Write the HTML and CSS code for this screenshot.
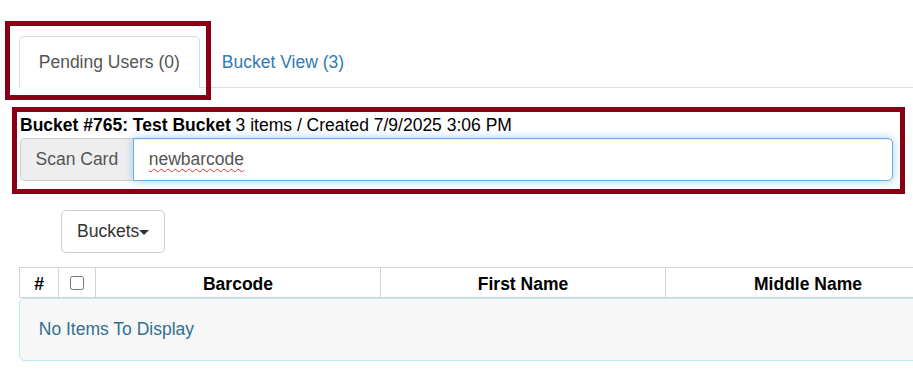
FILE: index.html
```html
<!DOCTYPE html>
<html lang="en">
<head>
    <meta charset="UTF-8">
    <meta name="viewport" content="width=device-width, initial-scale=1.0">
    <title>Patron Buckets</title>
    <link rel="stylesheet" href="styles.css">
</head>
<body>
    <div class="page">
        <div class="tabs-wrap">
            <ul class="nav-tabs">
                <li class="active"><a href="#">Pending Users (0)</a></li>
                <li><a href="#">Bucket View (3)</a></li>
            </ul>
            <!-- annotation box around the active tab -->
            <div class="mark mark-tab"></div>
        </div>

        <div class="bucket-box">
            <div class="bucket-title"><strong>Bucket #765: Test Bucket</strong> 3 items / Created 7/9/2025 3:06 PM</div>
            <div class="input-group">
                <span class="addon">Scan Card</span>
                <div class="scan-input"><span class="misspelled">newbarcode</span></div>
            </div>
        </div>

        <div class="toolbar">
            <button class="btn">Buckets<span class="caret"></span></button>
        </div>

        <table class="grid">
            <colgroup>
                <col class="col-num">
                <col class="col-check">
                <col class="col-field">
                <col class="col-field">
                <col class="col-field">
            </colgroup>
            <thead>
                <tr>
                    <th>#</th>
                    <th><input type="checkbox"></th>
                    <th>Barcode</th>
                    <th>First Name</th>
                    <th>Middle Name</th>
                </tr>
            </thead>
        </table>
        <div class="empty">No Items To Display</div>
    </div>
</body>
</html>
```

FILE: styles.css
```css
:root {
    --mark-color: #880015;
    --border-color: #d3d3d3;
    --link-color: #337ab7;
    --muted-text: #555;
}

* {
    margin: 0;
    padding: 0;
    box-sizing: border-box;
}

html, body {
    overflow: hidden;
}

body {
    font-family: "Liberation Sans", Arial, sans-serif;
    font-size: 17.5px;
    line-height: 25px;
    color: #333;
    background-color: white;
}

.page {
    padding: 36px 0 0 19px;
}

.tabs-wrap {
    position: relative;
}

.nav-tabs {
    display: flex;
    list-style: none;
    border-bottom: 1px solid #ddd;
}

.nav-tabs li {
    margin-bottom: -1px;
    margin-right: 2.5px;
}

.nav-tabs a {
    display: block;
    padding: 12.5px 18.75px;
    border: 1px solid transparent;
    border-radius: 5px 5px 0 0;
    color: var(--link-color);
    text-decoration: none;
}

.nav-tabs .active a {
    color: var(--muted-text);
    background-color: white;
    border-color: #ddd;
    border-bottom-color: transparent;
}

.mark {
    border: 5px solid var(--mark-color);
}

.mark-tab {
    position: absolute;
    top: -15px;
    left: -14px;
    width: 206px;
    height: 79px;
}

.bucket-box {
    width: 893px;
    margin: 19px 0 0 -7px;
    padding: 1px 7px 8.5px 3px;
    border: 5px solid var(--mark-color);
}

.bucket-title {
    color: #000;
}

.input-group {
    display: flex;
    height: 42.5px;
}

.addon {
    display: flex;
    align-items: center;
    padding: 0 14.5px;
    color: var(--muted-text);
    background-color: #eee;
    border: 1px solid #ccc;
    border-right: none;
    border-radius: 5px 0 0 5px;
}

.scan-input {
    flex: 1;
    display: flex;
    align-items: center;
    padding: 0 15px;
    color: var(--muted-text);
    background-color: white;
    border: 1px solid #66afe9;
    border-radius: 0 5px 5px 0;
    box-shadow: inset 0 1px 1px rgba(0, 0, 0, 0.075), 0 0 10px rgba(102, 175, 233, 0.6);
}

.misspelled {
    text-decoration: underline wavy #e0302c;
    text-decoration-thickness: 1px;
    text-underline-offset: 3px;
}

.toolbar {
    margin: 16px 0 0 42px;
}

.btn {
    font-family: inherit;
    font-size: 17.5px;
    line-height: 25px;
    padding: 7.75px 15px;
    color: #333;
    background-color: white;
    border: 1px solid #ccc;
    border-radius: 5px;
    cursor: pointer;
}

.caret {
    display: inline-block;
    width: 0;
    height: 0;
    vertical-align: middle;
    border-top: 5px solid;
    border-left: 5px solid transparent;
    border-right: 5px solid transparent;
}

.grid {
    margin-top: 14.5px;
    width: 931px;
    table-layout: fixed;
    border-collapse: collapse;
}

.col-num {
    width: 39px;
}

.col-check {
    width: 37px;
}

.col-field {
    width: 285px;
}

.grid th {
    padding: 6px 5px 3px;
    line-height: 20px;
    color: #000;
    text-align: center;
    white-space: nowrap;
    border: 1px solid var(--border-color);
}

.grid th input {
    width: 14px;
    height: 14px;
    margin: 0;
}

.empty {
    width: 1217px;
    padding: 18px 18.75px;
    color: #31708f;
    background-color: #f7f7f7;
    border: 1px solid #bce8f1;
    border-radius: 5px;
}
```
